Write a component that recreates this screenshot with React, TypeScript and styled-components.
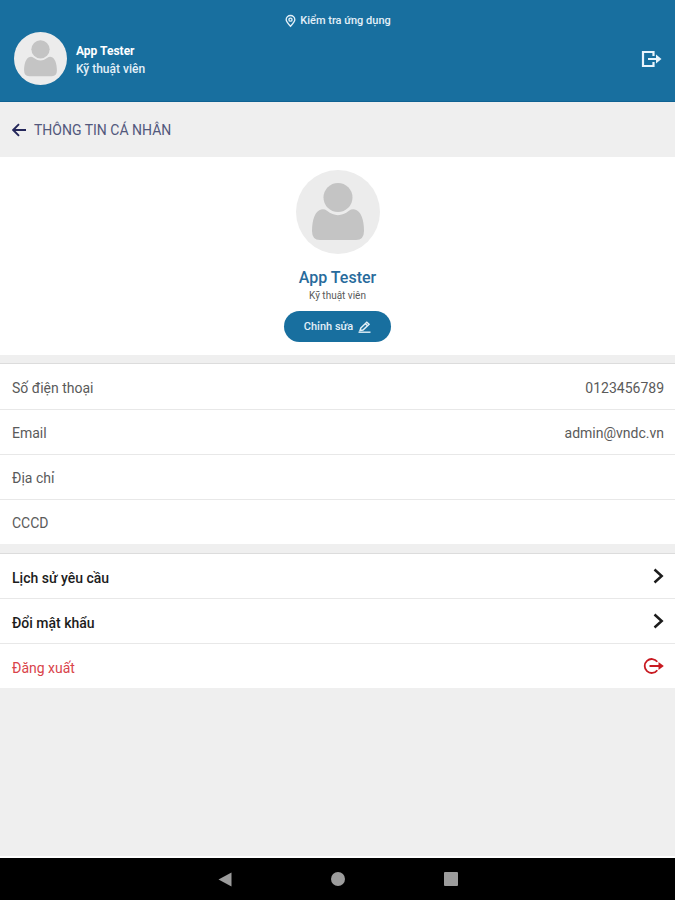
import React from "react";
import styled, { createGlobalStyle } from "styled-components";

const GlobalStyle = createGlobalStyle`
  *, *::before, *::after { box-sizing: border-box; }
  body {
    margin: 0;
    background: #efefef;
    font-family: Roboto, "Noto Sans", sans-serif;
    color: #5a5a5a;
  }
  h1, h2, p, dl, dt, dd, ul { margin: 0; padding: 0; font-weight: 400; }
  button { font-family: inherit; border: 0; background: none; padding: 0; cursor: pointer; }
  svg { display: block; flex: none; }
`;

const Screen = styled.div`
  min-height: 100vh;
  display: flex;
  flex-direction: column;
`;

const Header = styled.header`
  background: #186f9f;
  border-bottom: 1px solid #0f6293;
  color: #fff;
  padding: 14px 13px 16px 14px;
`;

const Location = styled.p`
  display: flex;
  justify-content: center;
  align-items: center;
  gap: 4px;
  font-size: 11px;
  line-height: 14px;
  font-weight: 500;
  color: #e3f0f8;
`;

const UserBar = styled.div`
  display: flex;
  align-items: center;
  gap: 9px;
  margin-top: 4px;
`;

const UserText = styled.div`
  flex: 1;
  padding-top: 2px;
  font-size: 12px;
  line-height: 18px;
  font-weight: 500;
  color: #e3f0f8;
`;

const UserName = styled.p`
  font-weight: 700;
  color: #fff;
`;

const UserRole = styled.p`
  font-weight: 500;
`;

const HeaderButton = styled.button`
  color: #e9f4fc;
`;

const TitleBar = styled.div`
  display: flex;
  align-items: center;
  gap: 8px;
  height: 55px;
  padding: 0 12px;
`;

const Title = styled.h1`
  padding-top: 1px;
  font-size: 14px;
  line-height: 20px;
  color: #52587c;
`;

const Main = styled.main`
  flex: 1;
`;

const Profile = styled.section`
  background: #fff;
  display: flex;
  flex-direction: column;
  align-items: center;
  padding: 13px 12px;
`;

const ProfileName = styled.h2`
  margin-top: 14px;
  font-size: 16px;
  line-height: 20px;
  font-weight: 500;
  color: #286b9c;
`;

const ProfileRole = styled.p`
  font-size: 10px;
  line-height: 16px;
`;

const EditButton = styled.button`
  display: flex;
  align-items: center;
  justify-content: center;
  gap: 5px;
  height: 31px;
  margin-top: 7px;
  padding: 1px 20px 0;
  border-radius: 16px;
  background: #186f9f;
  color: #e3f0f8;
  font-size: 11px;
  line-height: 14px;
  font-weight: 500;
`;

const Details = styled.dl`
  margin-top: 8px;
  background: #fff;
  border-top: 1px solid #dcdcdc;
`;

const DetailRow = styled.div`
  display: flex;
  align-items: center;
  justify-content: space-between;
  height: 45px;
  padding: 2px 11px 0 12px;
  font-size: 14px;
  line-height: 18px;
  & + & { border-top: 1px solid #e8e8e8; }
`;

const Actions = styled.ul`
  margin-top: 9px;
  background: #fff;
  border-top: 1px solid #dcdcdc;
  list-style: none;
`;

const ActionItem = styled.li`
  & + & { border-top: 1px solid #e8e8e8; }
`;

const ActionButton = styled.button<{ $danger?: boolean }>`
  display: flex;
  align-items: center;
  justify-content: space-between;
  width: 100%;
  height: 44px;
  padding: 0 11px 0 12px;
  font-size: 14px;
  line-height: 18px;
  font-weight: ${(p) => (p.$danger ? 400 : 500)};
  color: ${(p) => (p.$danger ? "#d9434a" : "#1c1c1c")};
`;

const ActionLabel = styled.span`
  padding-top: 3px;
`;

const SystemNav = styled.nav`
  display: flex;
  justify-content: center;
  gap: 92px;
  height: 44px;
  align-items: center;
  border-top: 2px solid #fff;
  background: #000;
  color: #9c9c9c;
`;

const NavButton = styled.button`
  display: grid;
  place-items: center;
  width: 21px;
  height: 21px;
  color: inherit;
`;

function Avatar({ size }: { size: number }) {
  return (
    <svg width={size} height={size} viewBox="0 0 84 84" role="img" aria-label="App Tester">
      <circle cx="42" cy="42" r="42" fill="#ececec" />
      <circle cx="42" cy="27.500" r="14.500" fill="#c4c4c4" />
      <path
        d="M25 39.500Q28.500 38.800 31 40.800Q42 49.500 53 40.800Q55.500 38.800 59 39.500C65 41 68 50 68 61Q68 70 60 70H24Q16 70 16 61C16 50 19 41 25 39.500Z"
        fill="#c4c4c4"
      />
    </svg>
  );
}

function PinIcon() {
  return (
    <svg width="11" height="14" viewBox="0 0 12 14" fill="none" stroke="currentColor" strokeWidth="1.500">
      <path d="M6 12.800C3 9.500 1.300 7.500 1.300 5.700a4.700 4.700 0 0 1 9.400 0C10.700 7.500 9 9.500 6 12.800Z" />
      <circle cx="6" cy="5.500" r="1.700" />
    </svg>
  );
}

function ExitIcon() {
  return (
    <svg width="21" height="18" viewBox="0 0 21 18" fill="none" stroke="currentColor" strokeWidth="2.200">
      <path d="M12.500 6V2H2v14h10.500v-4M7 9h10" />
      <path d="M15 4.500L20.500 9l-5.500 4.500Z" fill="currentColor" stroke="none" />
    </svg>
  );
}

function BackIcon() {
  return (
    <svg width="14" height="14" viewBox="0 0 14 14" fill="none" stroke="#24275a" strokeWidth="1.900">
      <path d="M14 7H1.500M7 1.200L1.200 7 7 12.800" />
    </svg>
  );
}

function PencilIcon() {
  return (
    <svg width="13" height="12" viewBox="0 0 13 12" fill="none" stroke="currentColor" strokeWidth="1.400">
      <path d="M2.800 7L8.800 1.200l2.300 2L5 9 2 9.500Z M7.300 2.700l2.200 2" />
      <path d="M0.500 11.200h12" />
    </svg>
  );
}

function ChevronIcon() {
  return (
    <svg width="11" height="16" viewBox="0 0 11 16" fill="none" stroke="currentColor" strokeWidth="2.500">
      <path d="M1.500 1.500L8.700 8 1.500 14.500" />
    </svg>
  );
}

function SignOutIcon() {
  return (
    <svg width="21" height="18" viewBox="0 0 21 18" fill="none" stroke="#c81920" strokeWidth="1.800">
      <path d="M14.300 4.800A7 7 0 1 0 14.300 13.200M6.500 9H17" />
      <path d="M15.500 5L20.800 9l-5.300 4Z" fill="#c81920" stroke="none" />
    </svg>
  );
}

const details = [
  { label: "Số điện thoại", value: "0123456789" },
  { label: "Email", value: "admin@vndc.vn" },
  { label: "Địa chỉ", value: "" },
  { label: "CCCD", value: "" },
];

const actions = [
  { label: "Lịch sử yêu cầu", danger: false },
  { label: "Đổi mật khẩu", danger: false },
  { label: "Đăng xuất", danger: true },
];

export default function App() {
  return (
    <Screen>
      <GlobalStyle />
      <Header>
        <Location>
          <PinIcon />
          Kiểm tra ứng dụng
        </Location>
        <UserBar>
          <Avatar size={53} />
          <UserText>
            <UserName>App Tester</UserName>
            <UserRole>Kỹ thuật viên</UserRole>
          </UserText>
          <HeaderButton aria-label="Đăng xuất">
            <ExitIcon />
          </HeaderButton>
        </UserBar>
      </Header>
      <Main>
        <TitleBar>
          <button aria-label="Quay lại">
            <BackIcon />
          </button>
          <Title>THÔNG TIN CÁ NHÂN</Title>
        </TitleBar>
        <Profile>
          <Avatar size={84} />
          <ProfileName>App Tester</ProfileName>
          <ProfileRole>Kỹ thuật viên</ProfileRole>
          <EditButton>
            Chỉnh sửa
            <PencilIcon />
          </EditButton>
        </Profile>
        <Details>
          {details.map((d) => (
            <DetailRow key={d.label}>
              <dt>{d.label}</dt>
              <dd>{d.value}</dd>
            </DetailRow>
          ))}
        </Details>
        <Actions>
          {actions.map((a) => (
            <ActionItem key={a.label}>
              <ActionButton $danger={a.danger}>
                <ActionLabel>{a.label}</ActionLabel>
                {a.danger ? <SignOutIcon /> : <ChevronIcon />}
              </ActionButton>
            </ActionItem>
          ))}
        </Actions>
      </Main>
      <SystemNav aria-label="Điều hướng">
        <NavButton aria-label="Trở về">
          <svg width="14" height="15" viewBox="0 0 14 15" fill="currentColor">
            <path d="M13.500 0.500v14L0.500 7.500Z" />
          </svg>
        </NavButton>
        <NavButton aria-label="Màn hình chính">
          <svg width="14" height="14" viewBox="0 0 14 14" fill="currentColor">
            <circle cx="7" cy="7" r="7" />
          </svg>
        </NavButton>
        <NavButton aria-label="Ứng dụng gần đây">
          <svg width="14" height="14" viewBox="0 0 14 14" fill="currentColor">
            <rect width="14" height="14" rx="1" />
          </svg>
        </NavButton>
      </SystemNav>
    </Screen>
  );
}
